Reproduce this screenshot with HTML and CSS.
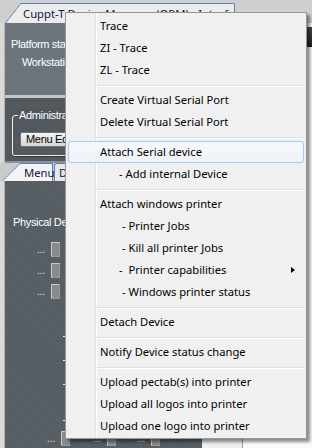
FILE: index.html
```html
<!DOCTYPE html>
<html lang="en">
<head>
    <meta charset="UTF-8">
    <meta name="viewport" content="width=device-width, initial-scale=1.0">
    <title>Cuppt-T Device Manager</title>
    <link rel="stylesheet" href="styles.css">
</head>
<body>
    <div id="window">
        <div class="tabstrip">
            <div class="wtab">
                <svg class="wtab-edge" width="17" height="20" viewBox="0 0 17 20">
                    <polygon points="0,20 15,1 17,0 17,20" fill="#ececec"/>
                    <path d="M0.5 20 L15 1.5 Q15.8 0.5 17 0.5" fill="none" stroke="#5b7ec2" stroke-width="1"/>
                </svg>
                <div class="wtab-body">Cuppt-T Device Manager (OPM) - Interface</div>
            </div>
        </div>

        <div class="main">
            <div class="leftcol">
                <div class="upper">
                    <div class="edge"></div>
                    <div class="upper-panel">
                        <div class="ptop">
                            <div class="lbl lbl-platform">Platform status :</div>
                            <div class="lbl lbl-ws">Workstation :</div>
                        </div>
                        <div class="padmin">
                            <div class="group">
                                <span class="legend">Administration</span>
                                <span class="btn">Menu Editor</span>
                            </div>
                        </div>
                    </div>
                </div>

                <div class="subtabs">
                    <svg class="stab-edge" width="19" height="18" viewBox="0 0 19 18">
                        <polygon points="0,18 17,1 19,0 19,18" fill="#f4f4f4"/>
                        <path d="M0.5 18 L17 1.5 Q17.8 0.5 19 0.5" fill="none" stroke="#5b7ec2" stroke-width="1"/>
                    </svg>
                    <div class="stab stab-on">Menu</div>
                    <div class="stab">Devices</div>
                </div>

                <div class="lower">
                    <div class="edge"></div>
                    <div class="pdev">
                        <div class="lbl lbl-phys">Physical Devices</div>
                        <div class="dev-row"><span class="dots">...</span><span class="dev-box"></span></div>
                        <div class="dev-row"><span class="dots">...</span><span class="dev-box"></span></div>
                        <div class="dev-row"><span class="dots">...</span><span class="dev-box"></span></div>
                        <div class="ticks">
                            <span class="tick t1"></span>
                            <span class="tick t2"></span>
                            <span class="tick t3"></span>
                            <span class="tick t4"></span>
                        </div>
                        <div class="dev-line">
                            <span class="dots">...</span><span class="dev-box"></span>
                            <span class="dots">...</span><span class="dev-box"></span>
                            <span class="dots">...</span><span class="dev-box"></span>
                        </div>
                    </div>
                </div>
            </div>
            <div class="side"></div>
            <div class="doc">
                <div class="doc-head"></div>
            </div>
        </div>
    </div>

    <!-- context menu, open over the window -->
    <div class="menu">
        <div class="item">Trace</div>
        <div class="item">ZI - Trace</div>
        <div class="item">ZL - Trace</div>
        <div class="sep"></div>
        <div class="item">Create Virtual Serial Port</div>
        <div class="item">Delete Virtual Serial Port</div>
        <div class="sep"></div>
        <div class="item hot">Attach Serial device</div>
        <div class="item sub sub-add">- Add internal Device</div>
        <div class="sep"></div>
        <div class="item">Attach windows printer</div>
        <div class="item sub">- Printer Jobs</div>
        <div class="item sub">- Kill all printer Jobs</div>
        <div class="item sub sub-add">-  Printer capabilities<span class="arrow"></span></div>
        <div class="item sub">- Windows printer status</div>
        <div class="sep"></div>
        <div class="item">Detach Device</div>
        <div class="sep"></div>
        <div class="item">Notify Device status change</div>
        <div class="sep"></div>
        <div class="item">Upload pectab(s) into printer</div>
        <div class="item">Upload all logos into printer</div>
        <div class="item">Upload one logo into printer</div>
    </div>
</body>
</html>
```

FILE: styles.css
```css
/* page */
body {
    margin: 0;
    width: 312px;
    height: 448px;
    overflow: hidden;
    background: #d2d2d2;
    font-family: "Noto Sans", "Open Sans", sans-serif;
}

#window {
    width: 312px;
    height: 448px;
    display: flex;
    flex-direction: column;
}

/* window tab strip */
.tabstrip {
    height: 23px;
    flex: none;
    background: #cfcfcf;
    padding-left: 5px;
    box-sizing: border-box;
    display: flex;
    align-items: flex-end;
}

.wtab {
    display: flex;
    height: 20px;
}

.wtab-edge {
    display: block;
}

.wtab-body {
    width: 213px;
    height: 20px;
    box-sizing: border-box;
    background: #ececec;
    border-top: 1px solid #5b7ec2;
    border-right: 1px solid #5b7ec2;
    border-top-right-radius: 2px;
    padding-left: 1px;
    font-size: 11.3px;
    line-height: 19px;
    color: #141446;
    white-space: nowrap;
    overflow: hidden;
}

.main {
    flex: 1;
    display: flex;
}

.leftcol {
    width: 202px;
    flex: none;
    display: flex;
    flex-direction: column;
}

/* upper panel */
.upper {
    height: 140px;
    flex: none;
    display: flex;
}

.edge {
    width: 4px;
    flex: none;
    background: #d9d9d9;
    border-right: 1px solid #b4b4b4;
}

.upper-panel {
    flex: 1;
    display: flex;
    flex-direction: column;
}

.ptop {
    height: 75px;
    background: #6b737a repeating-linear-gradient(45deg, rgba(255,255,255,0.035) 0 1px, transparent 1px 3px);
    border-bottom: 3px solid #c6c6c6;
    box-sizing: border-box;
    padding-top: 12px;
}

.lbl {
    font-family: "Liberation Sans", Arial, sans-serif;
    font-size: 11px;
    letter-spacing: -0.35px;
    color: #ffffff;
    white-space: nowrap;
    height: 18px;
    line-height: 18px;
}

.lbl-platform {
    padding-left: 6px;
}

.lbl-ws {
    padding-left: 17px;
}

.padmin {
    flex: 1;
    background: #50585e repeating-linear-gradient(45deg, rgba(255,255,255,0.03) 0 1px, transparent 1px 3px);
    border-bottom: 2px solid #8d9296;
    padding: 17px 0 0 7px;
}

.group {
    width: 180px;
    height: 41px;
    box-sizing: border-box;
    border: 1px solid #eeeeee;
    border-radius: 3px;
    box-shadow: 1px 1px 0 #2f3438;
    position: relative;
}

.legend {
    position: absolute;
    left: 5px;
    top: -8px;
    padding: 0 1px;
    background: #50585e;
    font-family: "Liberation Sans", Arial, sans-serif;
    font-size: 11px;
    letter-spacing: -0.35px;
    line-height: 14px;
    color: #ffffff;
}

.btn {
    display: block;
    margin: 16px 0 0 7px;
    width: 90px;
    height: 15px;
    box-sizing: border-box;
    border: 1px solid #707070;
    border-radius: 2px;
    background: linear-gradient(#f4f4f4, #e4e4e4 50%, #d6d6d6);
    padding-left: 5px;
    font-family: "Liberation Sans", Arial, sans-serif;
    font-size: 11px;
    letter-spacing: -0.3px;
    line-height: 13px;
    color: #000;
    white-space: nowrap;
    overflow: hidden;
}

/* inner tab strip */
.subtabs {
    height: 18px;
    flex: none;
    background: #cbcbcb;
    display: flex;
    padding-left: 2px;
}

.stab-edge {
    display: block;
}

.stab {
    height: 18px;
    box-sizing: border-box;
    border-top: 1px solid #5b7ec2;
    border-right: 1px solid #5b7ec2;
    background: #f4f4f4;
    font-size: 11.3px;
    line-height: 17px;
    color: #141446;
    padding: 0 3px 0 3px;
}

.stab-on {
    width: 32px;
}

.stab:not(.stab-on) {
    margin-left: 1px;
    border-left: 1px solid #5b7ec2;
    border-top-left-radius: 3px;
    background: #e8e8e8;
    padding-left: 4px;
}

/* lower panel */
.lower {
    flex: 1;
    display: flex;
}

.pdev {
    flex: 1;
    background: #555d63 repeating-linear-gradient(45deg, rgba(255,255,255,0.035) 0 1px, transparent 1px 3px);
    padding-top: 32px;
    box-sizing: border-box;
}

.lbl-phys {
    padding-left: 8px;
    margin-bottom: 11px;
}

.dev-row {
    display: flex;
    align-items: flex-end;
    height: 15px;
    margin-bottom: 6px;
    padding-left: 32px;
}

.dots {
    font-family: "Liberation Sans", Arial, sans-serif;
    font-size: 10px;
    line-height: 10px;
    color: #e4e4e4;
    width: 14px;
    margin-bottom: 2px;
}

.dev-box {
    width: 9px;
    height: 15px;
    box-sizing: border-box;
    background: #8a8a8a;
    border: 1px solid #cbcbcb;
    border-right-color: #9a9a9a;
    border-bottom-color: #9a9a9a;
}

.ticks {
    padding-left: 58px;
    height: 126px;
    display: flex;
    flex-direction: column;
    padding-top: 31px;
    box-sizing: border-box;
}

.tick {
    display: block;
    width: 2px;
    height: 1px;
    background: #f0f0f0;
}

.t2, .t3 {
    margin-top: 23px;
}

.t4 {
    margin-top: 35px;
}

.dev-line {
    display: flex;
    align-items: flex-end;
    height: 15px;
    padding-left: 42px;
}

.dev-line .dev-box {
    margin-right: 21px;
}

.dev-line .dev-box:nth-of-type(2) {
    margin-right: 23px;
}

.side {
    width: 40px;
    flex: none;
    background: #efefef;
    border-right: 1px solid #a0a0a0;
}

.doc {
    flex: 1;
    background: #fbfbfb;
    padding-top: 4px;
}

.doc-head {
    height: 20px;
    background: linear-gradient(#4a4a4a, #1e1e1e);
}

/* context menu */
.menu {
    position: absolute;
    left: 65px;
    top: 12px;
    width: 242px;
    box-sizing: border-box;
    border: 1px solid #979797;
    padding: 2px 2px 1px 2px;
    background: #f0f0f0 linear-gradient(to right, transparent 29px, #e2e3e3 29px, #e2e3e3 30px, #ffffff 30px, #ffffff 31px, transparent 31px);
    box-shadow: 3px 3px 3px rgba(0, 0, 0, 0.45);
    font-family: "Noto Sans", "Open Sans", sans-serif;
    font-size: 11.2px;
    color: #000;
}

.item {
    height: 22px;
    line-height: 22px;
    padding-left: 32px;
    box-sizing: border-box;
    white-space: pre;
    display: flex;
    align-items: center;
}

.item.hot {
    border: 1px solid #a9c9ee;
    border-radius: 3px;
    background: linear-gradient(#f6f8fb, #edf2f9);
    padding-left: 31px;
}

.item.sub {
    padding-left: 54px;
}

.item.sub-add {
    padding-left: 51px;
}

.arrow {
    margin-left: auto;
    margin-right: 9px;
    width: 0;
    height: 0;
    border-left: 4px solid #000;
    border-top: 3.5px solid transparent;
    border-bottom: 3.5px solid transparent;
}

.sep {
    height: 8px;
    margin-left: 28px;
    box-sizing: border-box;
    padding-top: 4px;
}

.sep::after {
    content: "";
    display: block;
    height: 1px;
    background: #e0e0e0;
    border-bottom: 1px solid #ffffff;
}
```
